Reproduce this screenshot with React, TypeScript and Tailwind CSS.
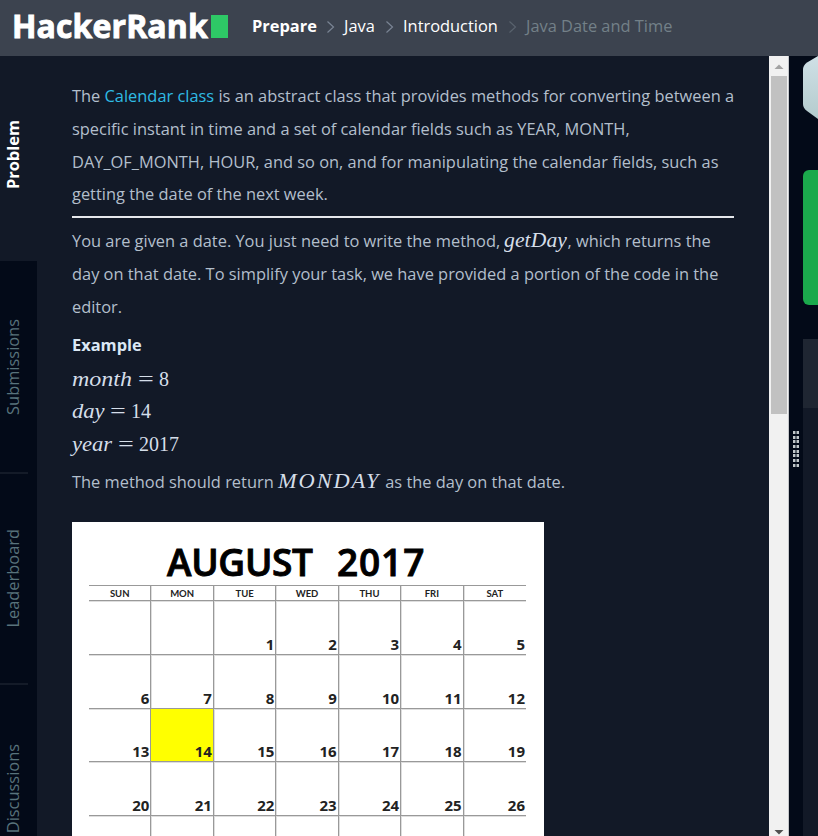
import React from "react";

const days = ["SUN", "MON", "TUE", "WED", "THU", "FRI", "SAT"];
const weeks: (number | null)[][] = [
  [null, null, 1, 2, 3, 4, 5],
  [6, 7, 8, 9, 10, 11, 12],
  [13, 14, 15, 16, 17, 18, 19],
  [20, 21, 22, 23, 24, 25, 26],
];

function Header() {
  return (
    <header className="flex h-14 shrink-0 items-start bg-[#3c434f] text-white">
      <div className="flex h-[52px] w-[252px] items-center pl-3">
        <span className="w-[199px] whitespace-nowrap text-[32px] leading-[52px] font-bold tracking-[0.1px] [-webkit-text-stroke:0.9px_white]">
          HackerRank
        </span>
        <span className="h-[23px] w-[17px] bg-[#2ec866]" />
      </div>
      <nav className="flex h-[53px] items-center whitespace-nowrap text-[16.4px]">
        <span className="w-[75px] font-bold">Prepare</span>
        <Chevron className="text-[#7a8494]" />
        <span className="w-[42px]">Java</span>
        <Chevron className="text-[#7a8494]" />
        <span className="w-[106px]">Introduction</span>
        <Chevron className="text-[#59626d]" />
        <span className="text-[#738088]">Java Date and Time</span>
      </nav>
    </header>
  );
}

function Chevron({ className }: { className: string }) {
  return (
    <svg className={"h-[14px] w-[17px] shrink-0 " + className} viewBox="0 0 17 14" fill="none">
      <path d="M0.500 1.500L6.500 7L0.500 12.500" stroke="currentColor" strokeWidth="1.2" />
    </svg>
  );
}

function Tab({ label, className }: { label: string; className: string }) {
  return (
    <div className={"flex shrink-0 items-center pl-px " + className}>
      <span className="rotate-180 whitespace-nowrap leading-[24px] [writing-mode:vertical-rl]">{label}</span>
    </div>
  );
}

function Calendar() {
  return (
    <div className="mt-6 h-[330px] w-[472px] shrink-0 overflow-hidden bg-white pt-[19px] pl-[17px] text-[#222]">
      <div className="mb-[2px] flex h-[42px] items-center whitespace-nowrap text-[37px] leading-[40px] font-semibold text-black [-webkit-text-stroke:0.9px_black]">
        <span className="ml-[78px] w-[170px] tracking-[-0.3px]">AUGUST</span>
        <span className="tracking-[0.9px]">2017</span>
      </div>
      <div className="grid w-[437px] grid-cols-7 border-y border-[#999] font-['Lato',sans-serif] shadow-[0_1px_0_#dedede]">
        {days.map((d, i) => (
          <div
            key={d}
            className={
              "flex h-[14px] items-center justify-center text-[9.5px] leading-[11px] font-bold " +
              (i < 6 ? "border-r border-[#999] shadow-[1px_0_0_#dedede]" : "")
            }
          >
            {d}
          </div>
        ))}
      </div>
      {weeks.concat([[null, null, null, null, null, null, null]]).map((w, r) => (
        <div key={r} className="grid h-[53.7px] w-[437px] grid-cols-7 border-b border-[#999] shadow-[0_1px_0_#dedede]">
          {w.map((n, i) => (
            <div
              key={i}
              className={
                "flex items-end justify-end pr-px text-[15px] leading-[19px] font-bold " +
                (i < 6 ? "border-r border-[#999] shadow-[1px_0_0_#dedede] " : "") +
                (n === 14 ? "bg-[#ffff00]" : "")
              }
            >
              {n}
            </div>
          ))}
        </div>
      ))}
    </div>
  );
}

const mathFont = "whitespace-nowrap font-['Liberation_Serif',serif] text-[20px] leading-[20px] text-[#d5dee9] ";

function MathVar({ children, width, stretch }: { children: string; width: string; stretch: string }) {
  return (
    <span className={mathFont + "inline-block italic " + width}>
      <span className={"inline-block origin-left " + stretch}>{children}</span>
    </span>
  );
}

function Equation({ name, value, width, stretch }: { name: string; value: string; width: string; stretch: string }) {
  return (
    <p className="flex h-[32.8px] shrink-0 items-center">
      <MathVar width={width} stretch={stretch}>{name}</MathVar>
      <span className={mathFont + "w-[21px]"}>
        <span className="inline-block origin-left scale-x-[1.4]">=</span>
      </span>
      <span className={mathFont}>{value}</span>
    </p>
  );
}

function Problem() {
  return (
    <main className="flex h-full w-[732px] shrink-0 flex-col overflow-hidden bg-[#121927] pt-6 pl-[35px] text-[16.4px] leading-[32.8px] text-[#b3bfcc]">
      <div className="h-[131px] shrink-0 whitespace-nowrap">
        <p>The <a className="text-[#2fbbe4]">Calendar class</a> is an abstract class that provides methods for converting between a</p>
        <p>specific instant in time and a set of calendar fields such as YEAR, MONTH,</p>
        <p>DAY_OF_MONTH, HOUR, and so on, and for manipulating the calendar fields, such as</p>
        <p>getting the date of the next week.</p>
      </div>
      <hr className="mt-[5px] h-[2px] w-[662px] shrink-0 border-0 bg-[#e5e7eb]" />
      <div className="mt-[7px] shrink-0 whitespace-nowrap">
        <p className="h-[32.8px]">
          You are given a date. You just need to write the method,{" "}
          <MathVar width="w-[63px]" stretch="scale-x-[1.08] tracking-[0.1px]">getDay</MathVar>, which returns the
        </p>
        <p>day on that date. To simplify your task, we have provided a portion of the code in the</p>
        <p>editor.</p>
      </div>
      <p className="mt-[6px] shrink-0 font-bold text-[#dbe8f5]">Example</p>
      <Equation name="month" value="8" width="w-[66px]" stretch="scale-x-[1.2]" />
      <Equation name="day" value="14" width="w-[38px]" stretch="scale-x-[1.13]" />
      <Equation name="year" value="2017" width="w-[46px]" stretch="scale-x-[1.13]" />
      <p className="mt-[5px] h-[32.8px] shrink-0 whitespace-nowrap">
        The method should return <MathVar width="w-[103px]" stretch="scale-x-[1.12] tracking-[1.7px]">MONDAY</MathVar> as the day on that date.
      </p>
      <Calendar />
    </main>
  );
}

function Scrollbar() {
  return (
    <div className="flex w-5 shrink-0 flex-col items-center border-r border-[#c4c6c9] bg-[#f1f1f1]">
      <svg className="h-5 w-5 shrink-0" viewBox="0 0 20 20">
        <path d="M5.500 13L10 8.500L14.500 13Z" fill="#a3a3a3" />
      </svg>
      <div className="h-[338px] w-4 shrink-0 bg-[#c1c1c1]" />
      <svg className="mt-auto h-[10px] w-5 shrink-0" viewBox="0 0 20 10">
        <path d="M5.500 4L14.500 4L10 8.500Z" fill="#505050" />
      </svg>
    </div>
  );
}

export default function App() {
  return (
    <div className="flex h-[836px] w-[818px] flex-col overflow-hidden bg-[#030a18] font-['Open_Sans',sans-serif]">
      <Header />
      <div className="flex min-h-0 flex-1">
        <aside className="flex w-[37px] shrink-0 flex-col overflow-hidden text-[16.4px] text-[#59737c]">
          <Tab label="Problem" className="h-[205px] bg-[#121927] pb-[8px] font-bold text-white" />
          <Tab label="Submissions" className="h-[211px]" />
          <div className="h-[2px] w-7 shrink-0 bg-[#141b28]" />
          <Tab label="Leaderboard" className="h-[209px] pb-px" />
          <div className="h-[2px] w-7 shrink-0 bg-[#141b28]" />
          <Tab label="Discussions" className="h-[209px] pb-px" />
        </aside>
        <Problem />
        <Scrollbar />
        <div className="flex w-[14px] shrink-0 flex-col items-start gap-[1.7px] pt-[375px] pl-1">
          {Array.from({ length: 8 }, (_, i) => (
            <div key={i} className="flex h-[3px] w-[6px] shrink-0 justify-between bg-[#5a636b]">
              <span className="w-[2px] bg-[#c2c7ca]" />
              <span className="w-[2px] bg-[#c2c7ca]" />
            </div>
          ))}
        </div>
        <div className="flex w-[15px] shrink-0 flex-col">
          <svg className="h-[64px] w-[15px] shrink-0" viewBox="0 0 15 64">
            <defs>
              <linearGradient id="badge" x1="0" y1="0" x2="0" y2="1">
                <stop offset="0" stopColor="#cfe0e6" />
                <stop offset="1" stopColor="#b4cbcd" />
              </linearGradient>
            </defs>
            <path d="M15 0L4 6.500Q0 9 0 14V48Q0 52 4 55L15 63Z" fill="url(#badge)" />
          </svg>
          <div className="mt-[50px] h-[135px] shrink-0 rounded-l-[6px] bg-[#1ba94c]" />
          <div className="mt-[34px] h-[69px] shrink-0 bg-[#1f2632]" />
          <div className="flex-1 bg-[#121927]" />
        </div>
      </div>
    </div>
  );
}
